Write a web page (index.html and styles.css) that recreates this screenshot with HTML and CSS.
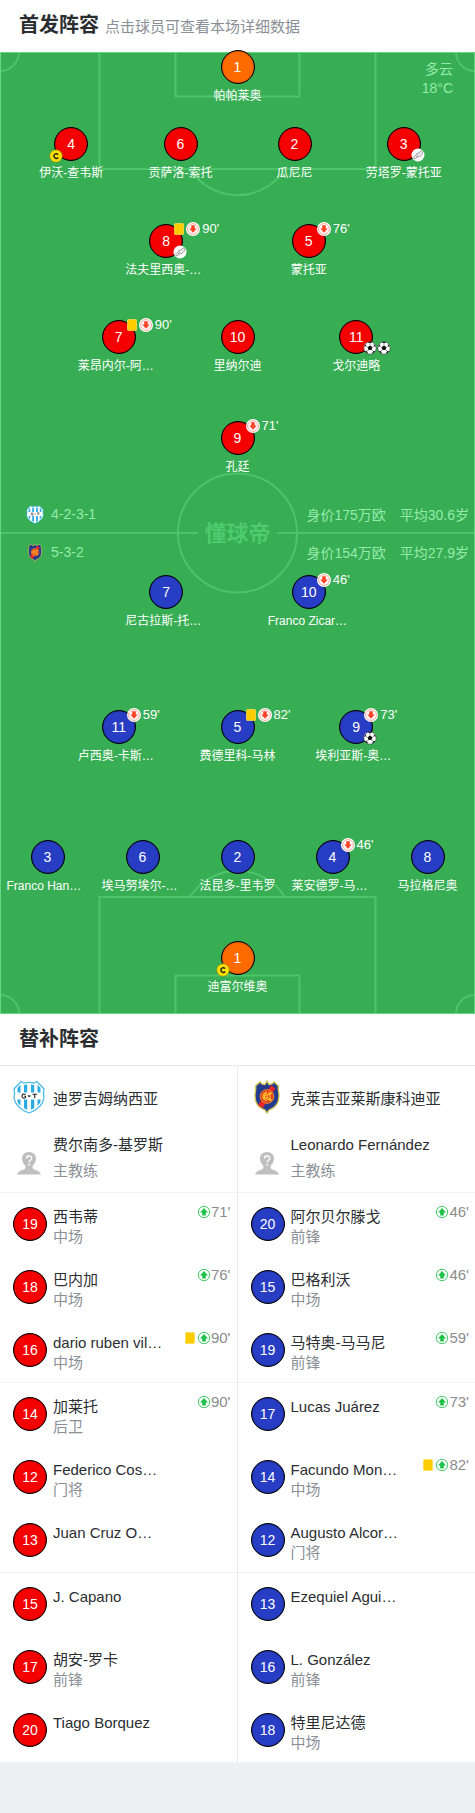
FILE: index.html
```html
<!DOCTYPE html>
<html lang="zh-CN">
<head>
<meta charset="utf-8">
<meta name="viewport" content="width=device-width, initial-scale=1">
<title>首发阵容</title>
<link rel="stylesheet" href="styles.css">
</head>
<body>
<svg class="sprite" aria-hidden="true">
  <symbol id="off" viewBox="0 0 14 14">
    <circle cx="7" cy="7" r="7" fill="#fff"/>
    <circle cx="7" cy="7" r="5.400" fill="none" stroke="#ff6a55" stroke-width=".6"/>
    <path d="M5.200 3.200h3.600v3.400h2L7 10.800 3.200 6.600h2z" fill="#ff4326"/>
  </symbol>
  <symbol id="on" viewBox="0 0 14 14">
    <circle cx="7" cy="7" r="5.700" fill="#fff" stroke="#2fc456" stroke-width=".9"/>
    <path d="M5.200 10.500V7.400H3L7 3l4 4.400H8.800v3.100z" fill="#1fc248"/>
  </symbol>
  <symbol id="card" viewBox="0 0 10 12">
    <rect x=".4" y=".4" width="9.200" height="11.200" rx="1.200" fill="#fc0" stroke="#ffdd55" stroke-width=".8"/>
  </symbol>
  <symbol id="ball" viewBox="0 0 14 14">
    <circle cx="7" cy="7" r="6.200" fill="#fff" stroke="#222" stroke-width=".5"/>
    <path d="M7 4.500l2.400 1.800-.9 2.800h-3l-.9-2.800zM4.800 1.200L7 2.300l2.200-1.100A6 6 0 0 0 4.800 1.200zM1 5.800l1.800-.5.600-2.200A6 6 0 0 0 1 5.800zM13 5.800l-1.800-.5-.600-2.200A6 6 0 0 1 13 5.800zM1.800 10.200l1.900-.3 1.400 2.700a6 6 0 0 1-3.300-2.400zM12.200 10.200l-1.900-.3-1.400 2.700a6 6 0 0 0 3.300-2.400z" fill="#111"/>
    <path d="M7 2.300v2.200M2.800 5.300l1.800 1M11.200 5.300l-1.800 1M3.700 9.900l1.800-.8M10.300 9.900l-1.800-.8" stroke="#333" stroke-width=".5"/>
  </symbol>
  <symbol id="boot" viewBox="0 0 14 14">
    <circle cx="7" cy="7" r="6.500" fill="#fff"/>
    <path d="M2.200 9.400C4 8.500 5.200 6.800 6 5.300L8.200 5l2-2.300 1.500 1.200c-.2 2.200-1.300 3.800-3.100 4.500L6.500 9 3.700 11zM6 6.600l1.100 1M5 8l.9.800" fill="#eee" stroke="#777" stroke-width=".7" stroke-linejoin="round"/>
  </symbol>
  <symbol id="captain" viewBox="0 0 14 14">
    <circle cx="7" cy="7" r="6.300" fill="#ffe000" stroke="#6d7c20" stroke-width=".6"/>
    <path d="M9.200 5.500C7.500 4 4.800 4.800 4.900 7.100c0 2.300 2.800 3 4.400 1.500" fill="none" stroke="#222" stroke-width="1.500"/>
  </symbol>
  <symbol id="gyt" viewBox="0 0 32 34">
    <clipPath id="gyt-clip"><path d="M8 2l3 1.500c3.500-1 6.500-1 10 0L24 2l6.500 7c-1 3-1 5 0 9-1 7-7 11.500-14.500 14.500C8.500 29.500 2.500 25 1.500 18c1-4 1-6 0-9z"/></clipPath>
    <g clip-path="url(#gyt-clip)">
      <path fill="#fff" d="M0 0h32v34H0z"/>
      <path fill="#28ace2" d="M4.500 0h3v34h-3zM11 0h3.200v34H11zM18 0h3.200v34H18zM24.500 0h3v34h-3z"/>
      <path fill="#fff" d="M0 12.500h32v7H0z"/>
    </g>
    <path d="M8 2l3 1.500c3.500-1 6.500-1 10 0L24 2l6.500 7c-1 3-1 5 0 9-1 7-7 11.500-14.500 14.500C8.500 29.500 2.500 25 1.500 18c1-4 1-6 0-9z" fill="none" stroke="#fff" stroke-width="3" clip-path="url(#gyt-clip)"/>
    <path d="M8 1.500l3 1.500c3.500-1 6.500-1 10 0L24 1.500 31 9c-1 3-1 5 0 9-1 7-7 12-15 15C8 30 2 25 1 18c1-4 1-6 0-9z" fill="none" stroke="#4dbbe8" stroke-width="1.300"/>
    <path d="M12.500 14.600c-1.500-1.200-3.500-.6-3.500 1.500s2 2.700 3.500 1.500v-1.400h-1.300M15 15.500l1.200 1 1.200-1M19.500 14.200h4.500M21.700 14.200v4" fill="none" stroke="#222" stroke-width="1.100"/>
  </symbol>
  <symbol id="colegiales" viewBox="0 0 26 34">
    <path d="M8 4l3 .5L13 1l2 3.500L18 4l2-2 4.500 4c-1 3 .5 5 .5 10 0 8-4 12-10 14l-2 3-2-3C5 28 1 24 1 16 1 11 2.500 9 1.500 6L6 2z" fill="#263a8e" stroke="#d2c64a" stroke-width="1.300"/>
    <path d="M17 5.500l4.500 2.700L8.700 28 4 25.200z" fill="#e9252b"/>
    <circle cx="13" cy="16.500" r="6.800" fill="#e83b25" stroke="#f39a20" stroke-width=".9"/>
    <path d="M13 12.500a4 4 0 1 0 0 8M18 13.500a3.400 3.400 0 1 0 0 6M12.500 14.500a2 2 0 0 0 0 4M16 12v9" fill="none" stroke="#ffca28" stroke-width="1.300"/>
  </symbol>
  <symbol id="avatar" viewBox="0 0 24 24">
    <path d="M12 1c4.500 0 7.300 3 7 7-.3 3.500-2 5.200-3.500 7 0 2.500.5 3.400 3 4 2.500.7 4.500 1.500 5.500 4.500H0C1 20.500 3 19.700 5.500 19c2.500-.6 3-1.500 3-4C7 13.200 5.300 11.500 5 8c-.3-4 2.500-7 7-7z" fill="#bfbfbf"/>
    <path d="M9.500 7.500c0-3.300 5.200-3.300 5.200-.2 0 2-2.500 2-2.500 4.200M12.200 13v1.800" fill="none" stroke="#fff" stroke-width="1.400"/>
  </symbol>
</svg>

<main class="page">
  <header class="head">
    <h1 class="title">首发阵容</h1>
    <p class="hint">点击球员可查看本场详细数据</p>
  </header>

  <section class="pitch" aria-label="首发阵容">
    <svg class="lines" viewBox="0 0 475 963" preserveAspectRatio="none" aria-hidden="true">
      <g fill="none" stroke="#4dc46c" stroke-width="2">
        <path d="M99.500 0v117h276V0M175.500 0v44.500h124V0M190 117a56 56 0 0 0 95 0"/>
        <path d="M99.500 963V846h276v117M175.500 963V924.500h124V963M190 846a56 56 0 0 1 95 0"/>
        <circle cx="237.500" cy="481.500" r="59.500"/>
        <path d="M0 481.500h198M277 481.500h198"/>
        <path d="M0 19a19 19 0 0 0 19-19M456 0a19 19 0 0 0 19 19M0 944a19 19 0 0 1 19 19M456 963a19 19 0 0 1 19-19"/>
      </g>
      <rect x=".5" y=".5" width="474" height="962" fill="none" stroke="#62d982"/>
    </svg>
    <div class="watermark">懂球帝</div>
    <div class="weather">多云<br>18°C</div>

    <div class="formation">
      <div class="line one">
        <a class="player keeper" href="#"><span class="shirt">1</span><span class="name">帕帕莱奥</span></a>
      </div>
      <div class="line four">
        <a class="player home" href="#"><span class="shirt">4<span class="armband"><svg class="ico"><use href="#captain"/></svg></span></span><span class="name">伊沃-查韦斯</span></a>
        <a class="player home" href="#"><span class="shirt">6</span><span class="name">贡萨洛-索托</span></a>
        <a class="player home" href="#"><span class="shirt">2</span><span class="name">瓜尼尼</span></a>
        <a class="player home" href="#"><span class="shirt">3<span class="goals"><svg class="ico"><use href="#boot"/></svg></span></span><span class="name">劳塔罗-蒙托亚</span></a>
      </div>
      <div class="line two">
        <a class="player home" href="#"><span class="shirt">8<span class="events"><svg class="card"><use href="#card"/></svg><svg class="ico"><use href="#off"/></svg>90'</span><span class="goals"><svg class="ico"><use href="#boot"/></svg></span></span><span class="name cut">法夫里西奥-…</span></a>
        <a class="player home" href="#"><span class="shirt">5<span class="events"><svg class="ico"><use href="#off"/></svg>76'</span></span><span class="name">蒙托亚</span></a>
      </div>
      <div class="line three">
        <a class="player home" href="#"><span class="shirt">7<span class="events"><svg class="card"><use href="#card"/></svg><svg class="ico"><use href="#off"/></svg>90'</span></span><span class="name cut">莱昂内尔-阿…</span></a>
        <a class="player home" href="#"><span class="shirt">10</span><span class="name">里纳尔迪</span></a>
        <a class="player home" href="#"><span class="shirt">11<span class="goals"><svg class="ico"><use href="#ball"/></svg><svg class="ico"><use href="#ball"/></svg></span></span><span class="name">戈尔迪略</span></a>
      </div>
      <div class="line one">
        <a class="player home" href="#"><span class="shirt">9<span class="events"><svg class="ico"><use href="#off"/></svg>71'</span></span><span class="name">孔廷</span></a>
      </div>

      <div class="facts">
        <div class="fact"><svg class="mini"><use href="#gyt"/></svg><span class="shape">4-2-3-1</span><span>身价175万欧</span><span>平均30.6岁</span></div>
        <div class="fact"><svg class="mini"><use href="#colegiales"/></svg><span class="shape">5-3-2</span><span>身价154万欧</span><span>平均27.9岁</span></div>
      </div>

      <div class="line two">
        <a class="player away" href="#"><span class="shirt">7</span><span class="name cut">尼古拉斯-托…</span></a>
        <a class="player away" href="#"><span class="shirt">10<span class="events"><svg class="ico"><use href="#off"/></svg>46'</span></span><span class="name cut">Franco Zicar…</span></a>
      </div>
      <div class="line three">
        <a class="player away" href="#"><span class="shirt">11<span class="events"><svg class="ico"><use href="#off"/></svg>59'</span></span><span class="name cut">卢西奥-卡斯…</span></a>
        <a class="player away" href="#"><span class="shirt">5<span class="events"><svg class="card"><use href="#card"/></svg><svg class="ico"><use href="#off"/></svg>82'</span></span><span class="name">费德里科-马林</span></a>
        <a class="player away" href="#"><span class="shirt">9<span class="events"><svg class="ico"><use href="#off"/></svg>73'</span><span class="goals"><svg class="ico"><use href="#ball"/></svg></span></span><span class="name cut">埃利亚斯-奥…</span></a>
      </div>
      <div class="line five">
        <a class="player away" href="#"><span class="shirt">3</span><span class="name cut">Franco Han…</span></a>
        <a class="player away" href="#"><span class="shirt">6</span><span class="name cut">埃马努埃尔-…</span></a>
        <a class="player away" href="#"><span class="shirt">2</span><span class="name">法昆多-里韦罗</span></a>
        <a class="player away" href="#"><span class="shirt">4<span class="events"><svg class="ico"><use href="#off"/></svg>46'</span></span><span class="name cut">莱安德罗-马…</span></a>
        <a class="player away" href="#"><span class="shirt">8</span><span class="name">马拉格尼奥</span></a>
      </div>
      <div class="line one">
        <a class="player keeper" href="#"><span class="shirt">1<span class="armband"><svg class="ico"><use href="#captain"/></svg></span></span><span class="name">迪富尔维奥</span></a>
      </div>
    </div>
  </section>

  <header class="head bench-head">
    <h2 class="title">替补阵容</h2>
  </header>

  <section class="bench" aria-label="替补阵容">
    <div class="side home">
      <div class="staff">
        <div class="club"><svg class="crest"><use href="#gyt"/></svg><span>迪罗吉姆纳西亚</span></div>
        <div class="coach"><svg class="avatar"><use href="#avatar"/></svg><div class="who"><span>费尔南多-基罗斯</span><span class="role">主教练</span></div></div>
      </div>
      <div class="group">
        <a class="sub" href="#"><span class="shirt">19</span><span class="who"><span>西韦蒂</span><span class="role">中场</span></span><span class="time"><svg class="ico"><use href="#on"/></svg>71'</span></a>
        <a class="sub" href="#"><span class="shirt">18</span><span class="who"><span>巴内加</span><span class="role">中场</span></span><span class="time"><svg class="ico"><use href="#on"/></svg>76'</span></a>
        <a class="sub" href="#"><span class="shirt">16</span><span class="who"><span>dario ruben vil…</span><span class="role">中场</span></span><span class="time"><svg class="card"><use href="#card"/></svg><svg class="ico"><use href="#on"/></svg>90'</span></a>
      </div>
      <div class="group">
        <a class="sub" href="#"><span class="shirt">14</span><span class="who"><span>加莱托</span><span class="role">后卫</span></span><span class="time"><svg class="ico"><use href="#on"/></svg>90'</span></a>
        <a class="sub" href="#"><span class="shirt">12</span><span class="who"><span>Federico Cos…</span><span class="role">门将</span></span></a>
        <a class="sub" href="#"><span class="shirt">13</span><span class="who"><span>Juan Cruz O…</span></span></a>
      </div>
      <div class="group">
        <a class="sub" href="#"><span class="shirt">15</span><span class="who"><span>J. Capano</span></span></a>
        <a class="sub" href="#"><span class="shirt">17</span><span class="who"><span>胡安-罗卡</span><span class="role">前锋</span></span></a>
        <a class="sub" href="#"><span class="shirt">20</span><span class="who"><span>Tiago Borquez</span></span></a>
      </div>
    </div>
    <div class="side away">
      <div class="staff">
        <div class="club"><svg class="crest"><use href="#colegiales"/></svg><span>克莱吉亚莱斯康科迪亚</span></div>
        <div class="coach"><svg class="avatar"><use href="#avatar"/></svg><div class="who"><span>Leonardo Fernández</span><span class="role">主教练</span></div></div>
      </div>
      <div class="group">
        <a class="sub" href="#"><span class="shirt">20</span><span class="who"><span>阿尔贝尔滕戈</span><span class="role">前锋</span></span><span class="time"><svg class="ico"><use href="#on"/></svg>46'</span></a>
        <a class="sub" href="#"><span class="shirt">15</span><span class="who"><span>巴格利沃</span><span class="role">中场</span></span><span class="time"><svg class="ico"><use href="#on"/></svg>46'</span></a>
        <a class="sub" href="#"><span class="shirt">19</span><span class="who"><span>马特奥-马马尼</span><span class="role">前锋</span></span><span class="time"><svg class="ico"><use href="#on"/></svg>59'</span></a>
      </div>
      <div class="group">
        <a class="sub" href="#"><span class="shirt">17</span><span class="who"><span>Lucas Juárez</span></span><span class="time"><svg class="ico"><use href="#on"/></svg>73'</span></a>
        <a class="sub" href="#"><span class="shirt">14</span><span class="who"><span>Facundo Mon…</span><span class="role">中场</span></span><span class="time"><svg class="card"><use href="#card"/></svg><svg class="ico"><use href="#on"/></svg>82'</span></a>
        <a class="sub" href="#"><span class="shirt">12</span><span class="who"><span>Augusto Alcor…</span><span class="role">门将</span></span></a>
      </div>
      <div class="group">
        <a class="sub" href="#"><span class="shirt">13</span><span class="who"><span>Ezequiel Agui…</span></span></a>
        <a class="sub" href="#"><span class="shirt">16</span><span class="who"><span>L. González</span><span class="role">前锋</span></span></a>
        <a class="sub" href="#"><span class="shirt">18</span><span class="who"><span>特里尼达德</span><span class="role">中场</span></span></a>
      </div>
    </div>
  </section>
</main>
</body>
</html>
```
FILE: styles.css
```css
* {
  box-sizing: border-box;
}

body {
  margin: 0;
  background: #edeff1;
  color: #2b2e31;
  font-family: "Liberation Sans", "Noto Sans CJK SC", sans-serif;
  font-size: 15px;
}

a {
  color: inherit;
  text-decoration: none;
}

.sprite {
  position: absolute;
  width: 0;
  height: 0;
}

.page {
  background: #fff;
}

.head {
  display: flex;
  align-items: center;
  gap: 6px;
  height: 52px;
  padding: 0 19px 2px;
}

.title {
  margin: 0;
  font-size: 20px;
  line-height: 28px;
}

.hint {
  margin: 0;
  color: #8a9096;
}

/* Pitch */

.pitch {
  position: relative;
  display: grid;
  aspect-ratio: 475 / 962;
  background: #37ae53;
  color: #fff;
}

.lines {
  position: absolute;
  inset: 0;
  width: 100%;
  height: 100%;
}

.watermark {
  position: absolute;
  inset: 0;
  display: grid;
  place-items: center;
  padding-bottom: 4px;
  color: #4dcb6e;
  font-size: 22px;
  font-weight: 700;
}

.weather {
  position: absolute;
  top: 8px;
  right: 22px;
  color: #95eaab;
  font-size: 14px;
  line-height: 19px;
  text-align: right;
}

.formation {
  position: relative;
  display: grid;
  grid-template-rows: 77fr 97fr 96fr 101fr 74fr 80fr 135fr 130fr 101fr 73fr;
  min-width: 0;
  margin-top: -2px;
}

.line {
  display: flex;
  justify-content: center;
  min-width: 0;
}

.player {
  display: flex;
  flex-direction: column;
  align-items: center;
  gap: 3px;
  width: 30%;
  min-width: 0;
}

.three .player {
  width: 25%;
}

.four .player {
  width: 23%;
}

.four .player:nth-child(3) {
  margin-left: 1%;
}

.five .player {
  width: 20%;
}

.shirt {
  position: relative;
  display: grid;
  flex: none;
  place-items: center;
  width: 34px;
  height: 34px;
  border: 1px solid #000;
  border-radius: 50%;
  background: #f50000;
  box-shadow: inset 0 0 1px #000;
  color: #fff;
  font-size: 14px;
}

.away .shirt,
.away.player .shirt {
  background: #273dc3;
}

.keeper .shirt {
  background: #ff6a00;
}

.name {
  font-size: 12px;
  line-height: 18px;
  white-space: nowrap;
}

.cut {
  width: 82px;
}

.ico {
  display: block;
  flex: none;
  width: 14px;
  height: 14px;
}

.card {
  display: block;
  flex: none;
  width: 10px;
  height: 12px;
}

.events,
.goals,
.armband {
  position: absolute;
  display: flex;
  align-items: center;
  font-size: 13px;
  line-height: 14px;
}

.events {
  top: -3px;
  left: 24px;
  gap: 2px;
}

.goals {
  top: 20px;
  left: 23px;
}

.armband {
  top: 21px;
  left: -6px;
}

.facts {
  color: #95eaab;
  font-size: 14px;
}

.fact {
  display: flex;
  align-items: center;
  gap: 14px;
  height: 38px;
  padding: 0 6px 0 26px;
}

.shape {
  flex: 1;
  margin-left: -7px;
}

.mini {
  width: 18px;
  height: 19px;
}

/* Bench */

.bench-head {
  border-bottom: 1px solid #e8eaec;
}

.bench {
  display: grid;
  grid-template-columns: 1fr 1fr;
}

.side {
  min-width: 0;
}

.side.home {
  border-right: 1px solid #e8eaec;
}

.staff {
  padding-bottom: 8px;
  border-bottom: 1px solid #f3f4f5;
}

.club {
  display: flex;
  align-items: center;
  gap: 8px;
  height: 62px;
  padding-left: 13px;
}

.crest {
  width: 32px;
  height: 34px;
}

.coach {
  display: flex;
  align-items: flex-end;
  margin-top: 4px;
  padding-left: 17px;
}

.coach .who {
  margin-left: 12px;
  line-height: 26px;
}

.avatar {
  width: 24px;
  height: 24px;
  margin-bottom: 9px;
}

.group {
  display: grid;
  grid-template-rows: repeat(3, 1fr);
  height: 190px;
  border-bottom: 1px solid #f3f4f5;
}

.sub {
  display: flex;
  align-items: flex-start;
  padding: 14px 6px 0 13px;
}

.who {
  display: flex;
  flex: 1;
  flex-direction: column;
  min-width: 0;
  line-height: 20px;
  white-space: nowrap;
}

.sub .who {
  margin-left: 6px;
}

.role {
  color: #8a9096;
}

.time {
  display: flex;
  align-items: center;
  margin-top: -4px;
  color: #8c8c8c;
  line-height: 18px;
}

.time .ico {
  margin-left: 2px;
}
```
